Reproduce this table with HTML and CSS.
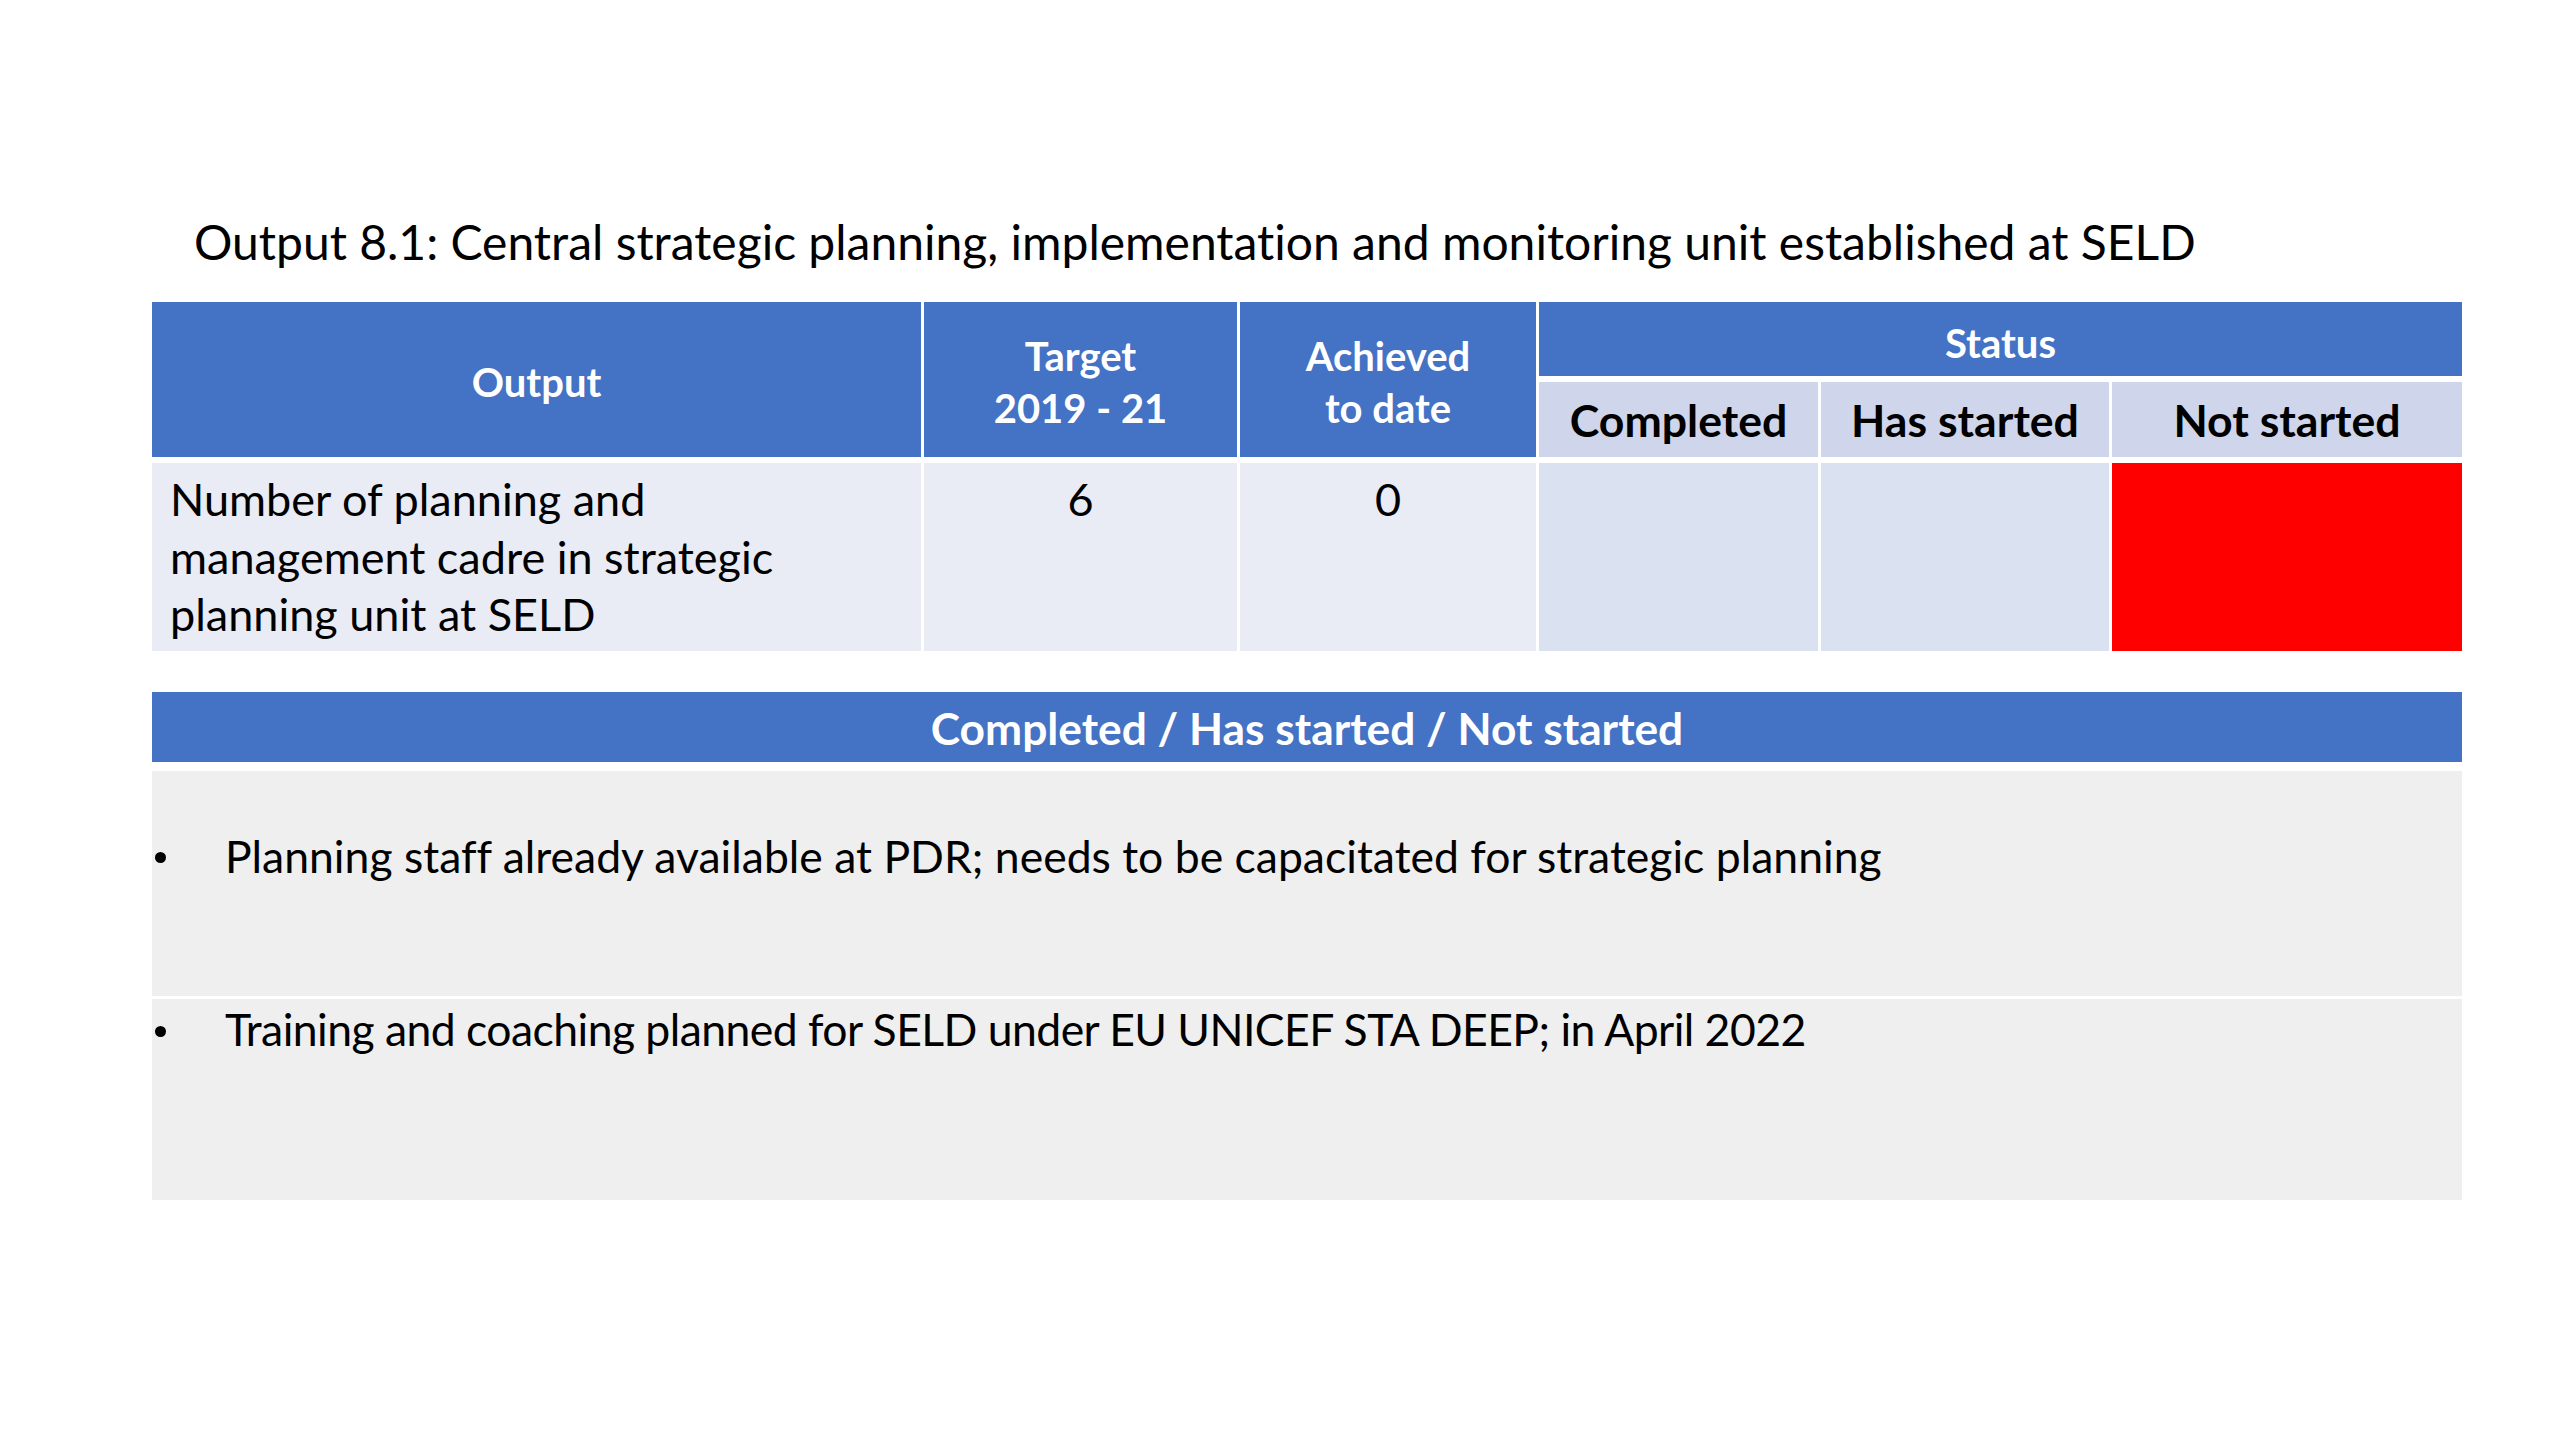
FILE: index.html
```html
<!DOCTYPE html>
<html lang="en">
<head>
<meta charset="utf-8">
<title>Output 8.1</title>
<link rel="stylesheet" href="styles.css">
</head>
<body>
<main class="slide">
  <h1 class="title">Output 8.1: Central strategic planning, implementation and monitoring unit established at SELD</h1>

  <div class="grid">
    <div class="hd hd-output">Output</div>
    <div class="hd hd-target">Target<br>2019 - 21</div>
    <div class="hd hd-achieved">Achieved<br>to date</div>
    <div class="hd hd-status">Status</div>
    <div class="sub">Completed</div>
    <div class="sub">Has started</div>
    <div class="sub">Not started</div>
    <div class="cell cell-text">Number of planning and<br>management cadre in strategic<br>planning unit at SELD</div>
    <div class="cell cell-num">6</div>
    <div class="cell cell-num">0</div>
    <div class="cell cell-status"></div>
    <div class="cell cell-status"></div>
    <div class="cell cell-red"></div>
  </div>

  <section class="notes">
    <div class="notes-head">Completed / Has started / Not started</div>
    <ul class="notes-body">
      <li class="note note-first">Planning staff already available at PDR; needs to be capacitated for strategic planning</li>
      <li class="note note-second">Training and coaching planned for SELD under EU UNICEF STA DEEP; in April 2022</li>
    </ul>
  </section>
</main>
</body>
</html>
```

FILE: styles.css
```css
html, body {
  margin: 0;
  padding: 0;
  background: #ffffff;
}

body {
  width: 2560px;
  height: 1440px;
  overflow: hidden;
  font-family: "Lato", "Open Sans", sans-serif;
  font-variant-ligatures: none;
  color: #000000;
}

.slide {
  padding: 211px 98px 0 152px;
  width: 2310px;
}

.title {
  margin: 0 0 29px 42px;
  font-size: 48px;
  font-weight: 400;
  line-height: 62px;
  white-space: nowrap;
}

.grid {
  display: grid;
  grid-template-columns: 769px 313px 296px 279px 288px 350px;
  grid-template-rows: 74px 75px 188px;
  column-gap: 3px;
  row-gap: 6px;
}

.hd {
  background: #4472c4;
  color: #ffffff;
  font-weight: 700;
  font-size: 40px;
  line-height: 52px;
  display: flex;
  align-items: center;
  justify-content: center;
  text-align: center;
}

.hd-output,
.hd-target,
.hd-achieved {
  grid-row: 1 / span 2;
  padding-top: 4px;
}

.hd-status {
  grid-column: 4 / span 3;
  padding-top: 8px;
}

.sub {
  background: #cfd5ea;
  font-weight: 700;
  font-size: 44.6px;
  line-height: 58px;
  display: flex;
  align-items: center;
  justify-content: center;
}

.cell {
  background: #e9ebf5;
  font-size: 45px;
  line-height: 57.6px;
}

.cell-text {
  padding: 8px 0 0 18px;
}

.cell-num {
  text-align: center;
  padding-top: 8px;
}

.cell-status {
  background: #dae2f1;
}

.cell-red {
  background: #ff0000;
}

.notes {
  margin-top: 41px;
}

.notes-head {
  height: 70px;
  background: #4472c4;
  color: #ffffff;
  font-weight: 700;
  font-size: 44.3px;
  line-height: 72px;
  text-align: center;
}

.notes-body {
  list-style: none;
  margin: 9px 0 0 0;
  padding: 0;
  display: flex;
  flex-direction: column;
  row-gap: 3px;
}

.note {
  position: relative;
  background: #efefef;
  font-size: 44.5px;
  line-height: 1;
  padding-left: 73px;
  box-sizing: border-box;
}

.note::before {
  content: "";
  position: absolute;
  left: 3px;
  width: 11px;
  height: 11px;
  border-radius: 50%;
  background: #000000;
}

.note-first {
  height: 225px;
  padding-top: 63px;
}

.note-first::before {
  top: 81px;
}

.note-second {
  height: 201px;
  padding-top: 8px;
  letter-spacing: -0.55px;
}

.note-second::before {
  top: 27px;
}
```
